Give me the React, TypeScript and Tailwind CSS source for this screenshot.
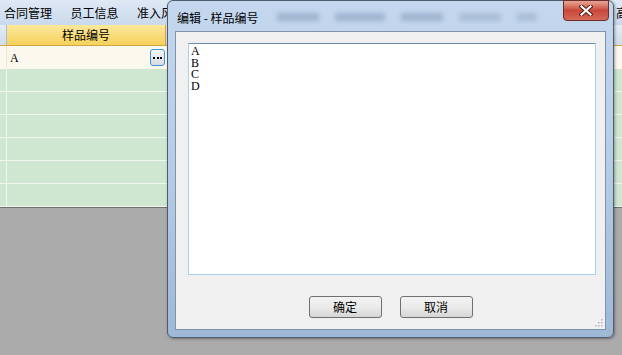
import { useState } from "react";

const menus = ["合同管理", "员工信息", "准入风险"];

const cjk = { fontFamily: '"Noto Sans CJK SC", "Noto Sans", sans-serif' };
const serifMono = { fontFamily: '"Liberation Serif", "DejaVu Serif", serif' };

function GridBackground() {
  return (
    <div className="flex flex-col w-full">
      {/* menu bar */}
      <div className="h-[25px] flex items-center bg-gradient-to-b from-[#dfe9f5] to-[#c9d9ec] text-[12px] text-black whitespace-nowrap" style={cjk}>
        <div className="w-[167px] overflow-hidden flex gap-[18.5px] pl-[4px]">
          {menus.map((m) => (
            <span key={m}>{m}</span>
          ))}
        </div>
        <div className="flex-1" />
        <span className="w-[6px] overflow-hidden">高</span>
      </div>

      {/* header row */}
      <div className="h-[21px] flex border-b border-[#d5a446]">
        <div className="w-[7px] bg-gradient-to-b from-[#e3ecf7] to-[#cfdcec] border-r border-[#a9bcd3]" />
        <div className="w-[159px] flex items-center justify-center bg-gradient-to-b from-[#fce89a] to-[#f6d25a] border-r border-[#d5a446] text-[12px] text-black" style={cjk}>
          样品编号
        </div>
        <div className="flex-1 bg-gradient-to-b from-[#e3ecf7] to-[#cfdcec]" />
      </div>

      {/* current row */}
      <div className="h-[23px] flex bg-[#fdf8ee]">
        <div className="w-[7px] border-r border-[#efe7d6]" />
        <div className="w-[159px] flex items-center justify-between pl-[3px] pr-[1px]">
          <span className="text-[12px] text-black" style={serifMono}>A</span>
          <div className="w-[15px] h-[17px] rounded-[3px] border border-[#3c95d9] bg-gradient-to-b from-[#f4f6f8] to-[#d9dde2] flex items-center justify-center gap-[1.5px]">
            <span className="w-[2px] h-[2px] bg-black" />
            <span className="w-[2px] h-[2px] bg-black" />
            <span className="w-[2px] h-[2px] bg-black" />
          </div>
        </div>
        <div className="flex-1" />
      </div>

      {/* green rows */}
      {[0, 1, 2, 3, 4, 5].map((i) => (
        <div key={i} className="h-[23px] flex bg-[#cfe6d1] border-b border-[#eef6ee]">
          <div className="w-[7px] border-r border-[#eef6ee]" />
          <div className="flex-1" />
        </div>
      ))}
      <div className="h-[1px] bg-[#6e6e6e]" />
    </div>
  );
}

function Dialog() {
  const [text] = useState("A\nB\nC\nD");
  return (
    <div className="absolute left-[167px] top-0 w-[447px] h-[338px] rounded-[6px] border border-[#4f5d6f] bg-gradient-to-b from-[#c4d7ee] via-[#b6cce6] to-[#9fb8d6] shadow-[1px_1px_3px_rgba(0,0,0,0.35)] flex flex-col">
      {/* title bar */}
      <div className="h-[30px] flex items-start relative">
        <span className="ml-[9px] mt-[8px] text-[12px] text-black" style={cjk}>编辑 - 样品编号</span>
        <div className="flex gap-[16px] mt-[12px] ml-[18px] opacity-50 blur-[2.5px]">
          <span className="w-[42px] h-[8px] bg-[#7b93b2]" />
          <span className="w-[50px] h-[8px] bg-[#7b93b2]" />
          <span className="w-[42px] h-[8px] bg-[#7b93b2]" />
          <span className="w-[42px] h-[8px] bg-[#8fa5c2]" />
          <span className="w-[20px] h-[8px] bg-[#8fa5c2]" />
        </div>
        <div className="absolute right-[4px] top-[-1px] w-[46px] h-[21px] rounded-b-[4px] border border-[#6b2d2a] bg-gradient-to-b from-[#e7a595] via-[#c9473a] to-[#d66a58] flex items-center justify-center">
          <svg width="14" height="11" viewBox="0 0 14 11">
            <path d="M2.5 1.5 L11.5 9.5 M11.5 1.5 L2.5 9.5" stroke="#4a1a16" strokeWidth="4" strokeLinecap="square" />
            <path d="M2.5 1.5 L11.5 9.5 M11.5 1.5 L2.5 9.5" stroke="#ffffff" strokeWidth="2.2" strokeLinecap="square" />
          </svg>
        </div>
      </div>

      {/* client area */}
      <div className="mx-[7px] mb-[7px] flex-1 border border-[#7e94ae] bg-[#f0f0f0] flex flex-col relative">
        <div className="mt-[11px] ml-[12px] mr-[9px] h-[232px] border border-[#a9d1ee] border-t-[#6f8fae] bg-white pl-[2px] pt-[2px]">
          <div className="whitespace-pre text-[12px] leading-[11.7px] text-black" style={serifMono}>
            {text}
          </div>
        </div>
        <div className="flex justify-center gap-[18px] mt-[21px]">
          {["确定", "取消"].map((b) => (
            <button
              key={b}
              className="w-[73px] h-[22px] rounded-[3px] border border-[#707070] bg-gradient-to-b from-[#f2f2f2] via-[#ebebeb] to-[#d6d6d6] text-[12px] text-black flex items-center justify-center"
              style={cjk}
            >
              {b}
            </button>
          ))}
        </div>
        <svg className="absolute right-[2px] bottom-[2px]" width="10" height="10" viewBox="0 0 10 10">
          {[
            [8, 2], [8, 5], [5, 5], [8, 8], [5, 8], [2, 8],
          ].map(([x, y], i) => (
            <rect key={i} x={x} y={y} width="1.5" height="1.5" fill="#b5b5b5" />
          ))}
        </svg>
      </div>
    </div>
  );
}

export default function App() {
  return (
    <div className="relative w-[622px] h-[355px] bg-[#ababab] overflow-hidden">
      <GridBackground />
      <Dialog />
    </div>
  );
}
